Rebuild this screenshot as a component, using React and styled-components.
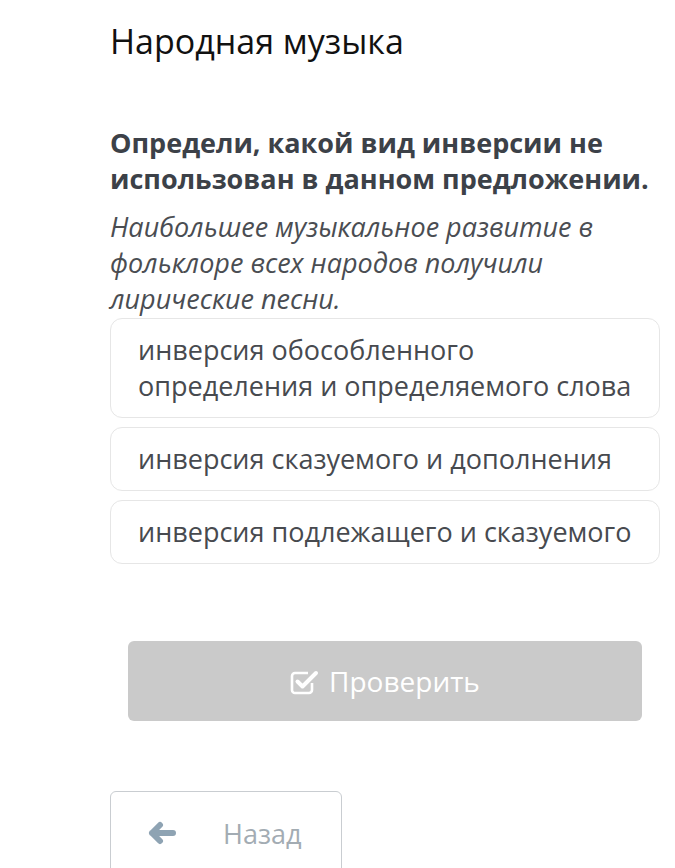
import React from "react";
import styled, { createGlobalStyle } from "styled-components";

const GlobalStyle = createGlobalStyle`
  html, body {
    margin: 0;
    padding: 0;
    background: #ffffff;
  }
  body {
    font-family: "Open Sans", "Noto Sans", sans-serif;
  }
`;

const options = [
  "инверсия обособленного определения и определяемого слова",
  "инверсия сказуемого и дополнения",
  "инверсия подлежащего и сказуемого",
];

// square with a tick running out of its top-right corner
const CheckSquareIcon = () => (
  <svg width="30" height="27" viewBox="0 0 30 27" fill="none">
    <path
      d="M22 15 V22 a3 3 0 0 1 -3 3 H5 a3 3 0 0 1 -3 -3 V8 a3 3 0 0 1 3 -3 H18"
      stroke="#ffffff"
      strokeWidth="2.6"
      strokeLinejoin="round"
    />
    <path
      d="M7.5 13.5 L12.5 18.5 L26 5"
      stroke="#ffffff"
      strokeWidth="4"
      strokeLinecap="round"
      strokeLinejoin="round"
    />
  </svg>
);

const ArrowLeftIcon = () => (
  <svg width="30" height="24" viewBox="0 0 30 24" fill="none">
    <path
      d="M26 12 H5 M13 4 L5 12 L13 20"
      stroke="#8ea3b3"
      strokeWidth="6"
      strokeLinecap="round"
      strokeLinejoin="round"
    />
  </svg>
);

const App = () => {
  return (
    <>
      <GlobalStyle />
      <Page>
        <Title>Народная музыка</Title>
        <Question>Определи, какой вид инверсии не использован в данном предложении.</Question>
        <Sentence>
          Наибольшее музыкальное развитие в фольклоре всех народов получили лирические песни.
        </Sentence>
        <Options>
          {options.map((o) => (
            <Option key={o}>{o}</Option>
          ))}
        </Options>
        <CheckButton>
          <CheckSquareIcon />
          <span>Проверить</span>
        </CheckButton>
        <BackButton>
          <ArrowLeftIcon />
          <span>Назад</span>
        </BackButton>
      </Page>
    </>
  );
};

export default App;

const Page = styled.div`
  width: 550px;
  padding: 16px 0 0 110px;
  height: 852px;
  overflow: hidden;
`;

const Title = styled.h1`
  margin: 0;
  font-family: "Open Sans", sans-serif;
  font-weight: 400;
  font-size: 34px;
  line-height: 50px;
  color: #111111;
`;

const Question = styled.p`
  margin: 59px 0 0;
  font-weight: 700;
  font-size: 27px;
  line-height: 36px;
  color: #3c4148;
`;

const Sentence = styled.p`
  margin: 12px 0 0;
  font-style: italic;
  font-size: 27px;
  line-height: 36px;
  color: #4a4d52;
`;

const Options = styled.div`
  display: flex;
  flex-direction: column;
  gap: 9px;
  margin-top: 1px;
`;

const Option = styled.div`
  border: 1px solid #e6e6e6;
  border-radius: 12px;
  padding: 13px 20px 13px 27px;
  font-size: 27px;
  line-height: 36px;
  color: #474a4f;
`;

const CheckButton = styled.button`
  display: flex;
  align-items: center;
  justify-content: center;
  gap: 9px;
  width: 514px;
  height: 80px;
  margin: 77px 0 0 18px;
  border: none;
  border-radius: 6px;
  background: #cacaca;
  color: #ffffff;
  font-family: "Open Sans", sans-serif;
  font-size: 28px;
  padding: 0;
`;

const BackButton = styled.button`
  display: flex;
  align-items: center;
  gap: 46px;
  width: 232px;
  height: 84px;
  margin-top: 70px;
  padding: 0 0 0 36px;
  background: #ffffff;
  border: 1px solid #c9cdd1;
  border-radius: 6px;
  font-family: "Open Sans", sans-serif;
  font-size: 27px;
  color: #a3acb3;
`;
